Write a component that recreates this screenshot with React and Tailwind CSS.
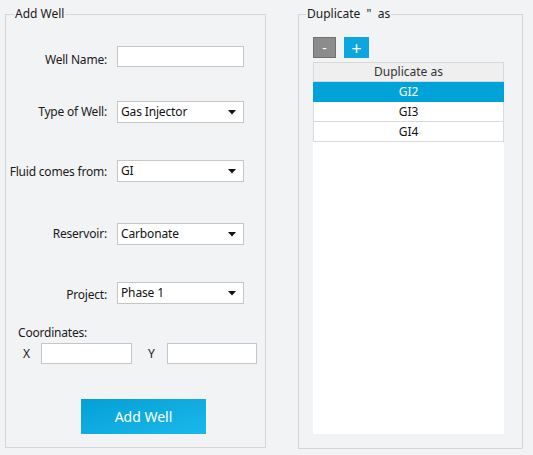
import { useState } from 'react'

const font = { fontFamily: '"Noto Sans", "Open Sans", sans-serif' }

function Arrow() {
  return (
    <svg width="8" height="5" viewBox="0 0 8 5" className="shrink-0">
      <path d="M0 0 H8 L4 4.5 Z" fill="#111" />
    </svg>
  )
}

function Combo({ value }) {
  return (
    <div className="flex h-[22px] w-[127px] items-center justify-between border border-[#c6c6c6] bg-white pl-[3px] pr-[7px] text-[12px] tracking-[-0.15px] text-[#111]">
      <span>{value}</span>
      <Arrow />
    </div>
  )
}

function Row({ label, children, className, labelClass = '' }) {
  return (
    <div className={'flex items-start ' + className}>
      <div
        className={
          'w-[101px] whitespace-nowrap text-right text-[12px] leading-[16px] tracking-[-0.2px] text-[#1a1a1a] ' +
          labelClass
        }
      >
        {label}
      </div>
      <div className="ml-[10px]">{children}</div>
    </div>
  )
}

function AddWellPanel() {
  return (
    <fieldset className="ml-[5px] h-[442px] w-[261px] border border-[#d6d6d6]">
      <legend className="ml-[8px] px-[1px] text-[12px] leading-[16px] text-[#1a1a1a]">Add Well</legend>
      <Row label="Well Name:" className="mt-[24px]" labelClass="mt-[6px]">
        <input className="block h-[21px] w-[127px] border border-[#c6c6c6] bg-white outline-none" />
      </Row>
      <Row label="Type of Well:" className="mt-[33px]" labelClass="mt-[3px]">
        <Combo value="Gas Injector" />
      </Row>
      <Row label="Fluid comes from:" className="mt-[37px]" labelClass="mt-[4px]">
        <Combo value="GI" />
      </Row>
      <Row label="Reservoir:" className="mt-[41px]" labelClass="mt-[3px]">
        <Combo value="Carbonate" />
      </Row>
      <Row label="Project:" className="mt-[37px]" labelClass="mt-[5px]">
        <Combo value="Phase 1" />
      </Row>
      <div className="ml-[12px] mt-[21px] text-[12px] leading-[16px] tracking-[-0.2px] text-[#1a1a1a]">Coordinates:</div>
      <div className="mt-[2px] flex items-start text-[12px] leading-[16px] text-[#1a1a1a]">
        <span className="ml-[17px] mt-[3px] w-[18px]">X</span>
        <input className="block h-[21px] w-[91px] border border-[#c6c6c6] bg-white outline-none" />
        <span className="ml-[16px] mt-[3px] w-[19px]">Y</span>
        <input className="block h-[21px] w-[90px] border border-[#c6c6c6] bg-white outline-none" />
      </div>
      <div className="mt-[35px] flex pl-[75px]">
        <button className="h-[35px] w-[125px] bg-gradient-to-br from-[#03a0d6] to-[#1ab8ea] text-[14px] text-white">
          Add Well
        </button>
      </div>
    </fieldset>
  )
}

function DuplicatePanel() {
  const [selected, setSelected] = useState('GI2')
  const rows = ['GI2', 'GI3', 'GI4']
  return (
    <fieldset className="ml-[32px] flex h-[443px] w-[225px] flex-col border border-[#d6d6d6]">
      <legend className="ml-[7px] whitespace-pre px-[1px] text-[12px] leading-[16px] text-[#1a1a1a]">
        {'Duplicate  "  as'}
      </legend>
      <div className="ml-[14px] mt-[15px] flex gap-[8px]">
        <button className="flex h-[21px] w-[23px] items-center justify-center border border-[#707070] bg-[#8c8c8c] text-[14px] leading-none text-white">
          -
        </button>
        <button className="flex h-[21px] w-[25px] items-center justify-center bg-[#0ea6df] text-[18px] leading-none text-white">
          +
        </button>
      </div>
      <div className="ml-[14px] mt-[4px] h-[372px] w-[191px] bg-white">
        <div className="flex h-[20px] items-center justify-center border border-[#d8d8d8] bg-[#efefef] text-[12px] text-[#333]">
          Duplicate as
        </div>
        {rows.map((r) => (
          <div
            key={r}
            onClick={() => setSelected(r)}
            className={
              'flex h-[20px] items-center justify-center border-x border-b text-[12px] ' +
              (selected === r
                ? 'border-[#00a3d8] bg-[#00a3d8] text-white'
                : 'border-[#dadada] bg-white text-[#111]')
            }
          >
            {r}
          </div>
        ))}
      </div>
    </fieldset>
  )
}

export default function App() {
  return (
    <div className="flex h-[455px] w-[533px] bg-[#f2f3f5] pt-[6px]" style={font}>
      <AddWellPanel />
      <DuplicatePanel />
    </div>
  )
}
